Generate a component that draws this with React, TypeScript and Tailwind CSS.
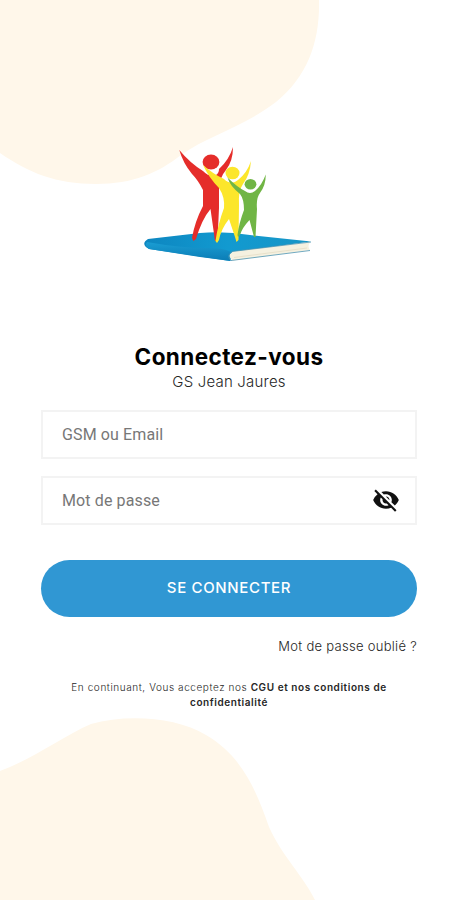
import React, { useState } from 'react';
import { MdVisibility, MdVisibilityOff } from 'react-icons/md';

function Background() {
  return (
    <svg className="absolute inset-0 h-full w-full" viewBox="0 0 454 900" fill="#fff7ea" aria-hidden="true">
      <path d="M0 0H319C320 41 308 76 276 102C242 128 209 135 181 155C158 173 133 184 96 184C56 184 29 173 0 153Z" />
      <path d="M0 771C35 758 63 736 91 724C127 714 176 717 206 735C242 756 256 790 269 827C282 856 304 877 315 900H0Z" />
    </svg>
  );
}

function Logo() {
  return (
    <svg className="h-[125px] w-[180px]" viewBox="140 140 180 125" role="img" aria-label="GS Jean Jaures">
      <defs>
        <linearGradient id="cover" x1="0" y1="0" x2="1" y2="0">
          <stop offset="0" stopColor="#0d86c0" />
          <stop offset="0.5" stopColor="#129ad0" />
          <stop offset="1" stopColor="#1795c6" />
        </linearGradient>
        <linearGradient id="spine" x1="0" y1="0" x2="0" y2="1">
          <stop offset="0" stopColor="#1a9dd3" />
          <stop offset="1" stopColor="#0b7cb5" />
        </linearGradient>
      </defs>
      {/* book */}
      <path d="M148 239L200 233Q225 231 250 235L311 241.5L233 252L230 261L149 249Q140 244 148 239Z" fill="url(#cover)" />
      <path d="M147 242Q180 248 207 248Q224 248 231 252Q227 257 231 261L200 257L149 249Q144 246 147 242Z" fill="url(#spine)" />
      <path d="M233 251.5L310 242.5Q307 246 310 250L233 260.5Q226 256 233 251.5Z" fill="#f5f1e0" />
      <path d="M234 257.5L307 248" stroke="#e2dac2" strokeWidth="0.7" fill="none" />
      <path d="M311 242L232 251.5Q226 256 231 260.5L310 250.5" stroke="#4b93b0" strokeWidth="0.8" fill="none" />
      {/* figures */}
      <g fill="#e52d2a">
        <ellipse cx="211" cy="162" rx="8.4" ry="7.4" />
        <path d="M179.3 150Q190 163 203 171Q210 178 216 175Q219 173 219 169Q229 160 233 147Q233 161 226 170Q219 178 219 190V208L217.5 241H215L210.5 209Q202 219 196 239L193.5 241L192 238Q195 221 203 206V190Q198 180 192 174Q183 163 179.3 150Z" />
      </g>
      <g fill="#fce62b">
        <ellipse cx="232.5" cy="173" rx="7" ry="6.3" />
        <path d="M203 165Q213 174 224 179Q231 186 238 180Q247 173 251 161Q250 175 243 184Q238 191 239 205L238.5 240L236.5 242L235 237L229 219Q221 229 219 240L217 243L215.5 241Q218 224 224 208Q225 197 219 188Q209 178 203 165Z" />
      </g>
      <g fill="#70b545">
        <ellipse cx="250.5" cy="184.3" rx="5.9" ry="5.3" />
        <path d="M227.5 177.5Q237 187 245 191Q250 195 255 191Q262 185 265.7 174.5Q266 185 260 193Q256 198 257 209L255.5 237H254L249.5 220Q242 228 240 235L238 237L237.5 235Q239 223 244 210Q244 199 240 194Q230 186 227.5 177.5Z" />
      </g>
    </svg>
  );
}

const FIELD = 'h-[49px] w-full border-2 border-[#f3f3f3] bg-white px-[19px] font-[Roboto,sans-serif] text-base tracking-[0.12px] text-gray-700 outline-none placeholder:text-[#777777]';

export default function App() {
  const [visible, setVisible] = useState(false);

  return (
    <div className="relative h-[900px] w-[454px] overflow-hidden bg-white font-[Inter,sans-serif] text-[#262626]">
      <Background />
      <main className="relative flex flex-col pr-[37px] pl-[41px] pt-[140px]">
        <div className="ml-px flex justify-center">
          <Logo />
        </div>
        <h1 className="mt-[78px] text-center text-[22.5px] leading-7 font-bold tracking-[0.42px] text-black">
          Connectez-vous
        </h1>
        <p className="text-center text-[15px] leading-[22px] font-light tracking-[0.2px]">GS Jean Jaures</p>

        <form className="mt-[17px] flex flex-col" onSubmit={(e) => e.preventDefault()}>
          <input className={FIELD} type="text" placeholder="GSM ou Email" />
          <div className="relative mt-[17px]">
            <input className={FIELD} type={visible ? 'text' : 'password'} placeholder="Mot de passe" />
            <button
              type="button"
              className="absolute top-[10px] right-[17px] text-[#111111]"
              aria-label="Afficher le mot de passe"
              onClick={() => setVisible(!visible)}
            >
              {visible ? <MdVisibility size={28} /> : <MdVisibilityOff size={28} />}
            </button>
          </div>
          <button
            type="submit"
            className="mt-[35px] h-[57px] rounded-full bg-[#3097d3] text-[15px] font-medium tracking-[0.65px] text-white"
          >
            SE CONNECTER
          </button>
        </form>

        <a href="#" className="mt-[19px] self-end text-[13px] leading-5 font-light tracking-[0.29px]">
          Mot de passe oublié ?
        </a>
        <p className="mt-6 text-center text-[10px] leading-[15px] font-light tracking-[0.58px] whitespace-nowrap">
          En continuant, Vous acceptez nos <span className="font-semibold tracking-[0.57px]">CGU et nos conditions de<br />confidentialité</span>
        </p>
      </main>
    </div>
  );
}
